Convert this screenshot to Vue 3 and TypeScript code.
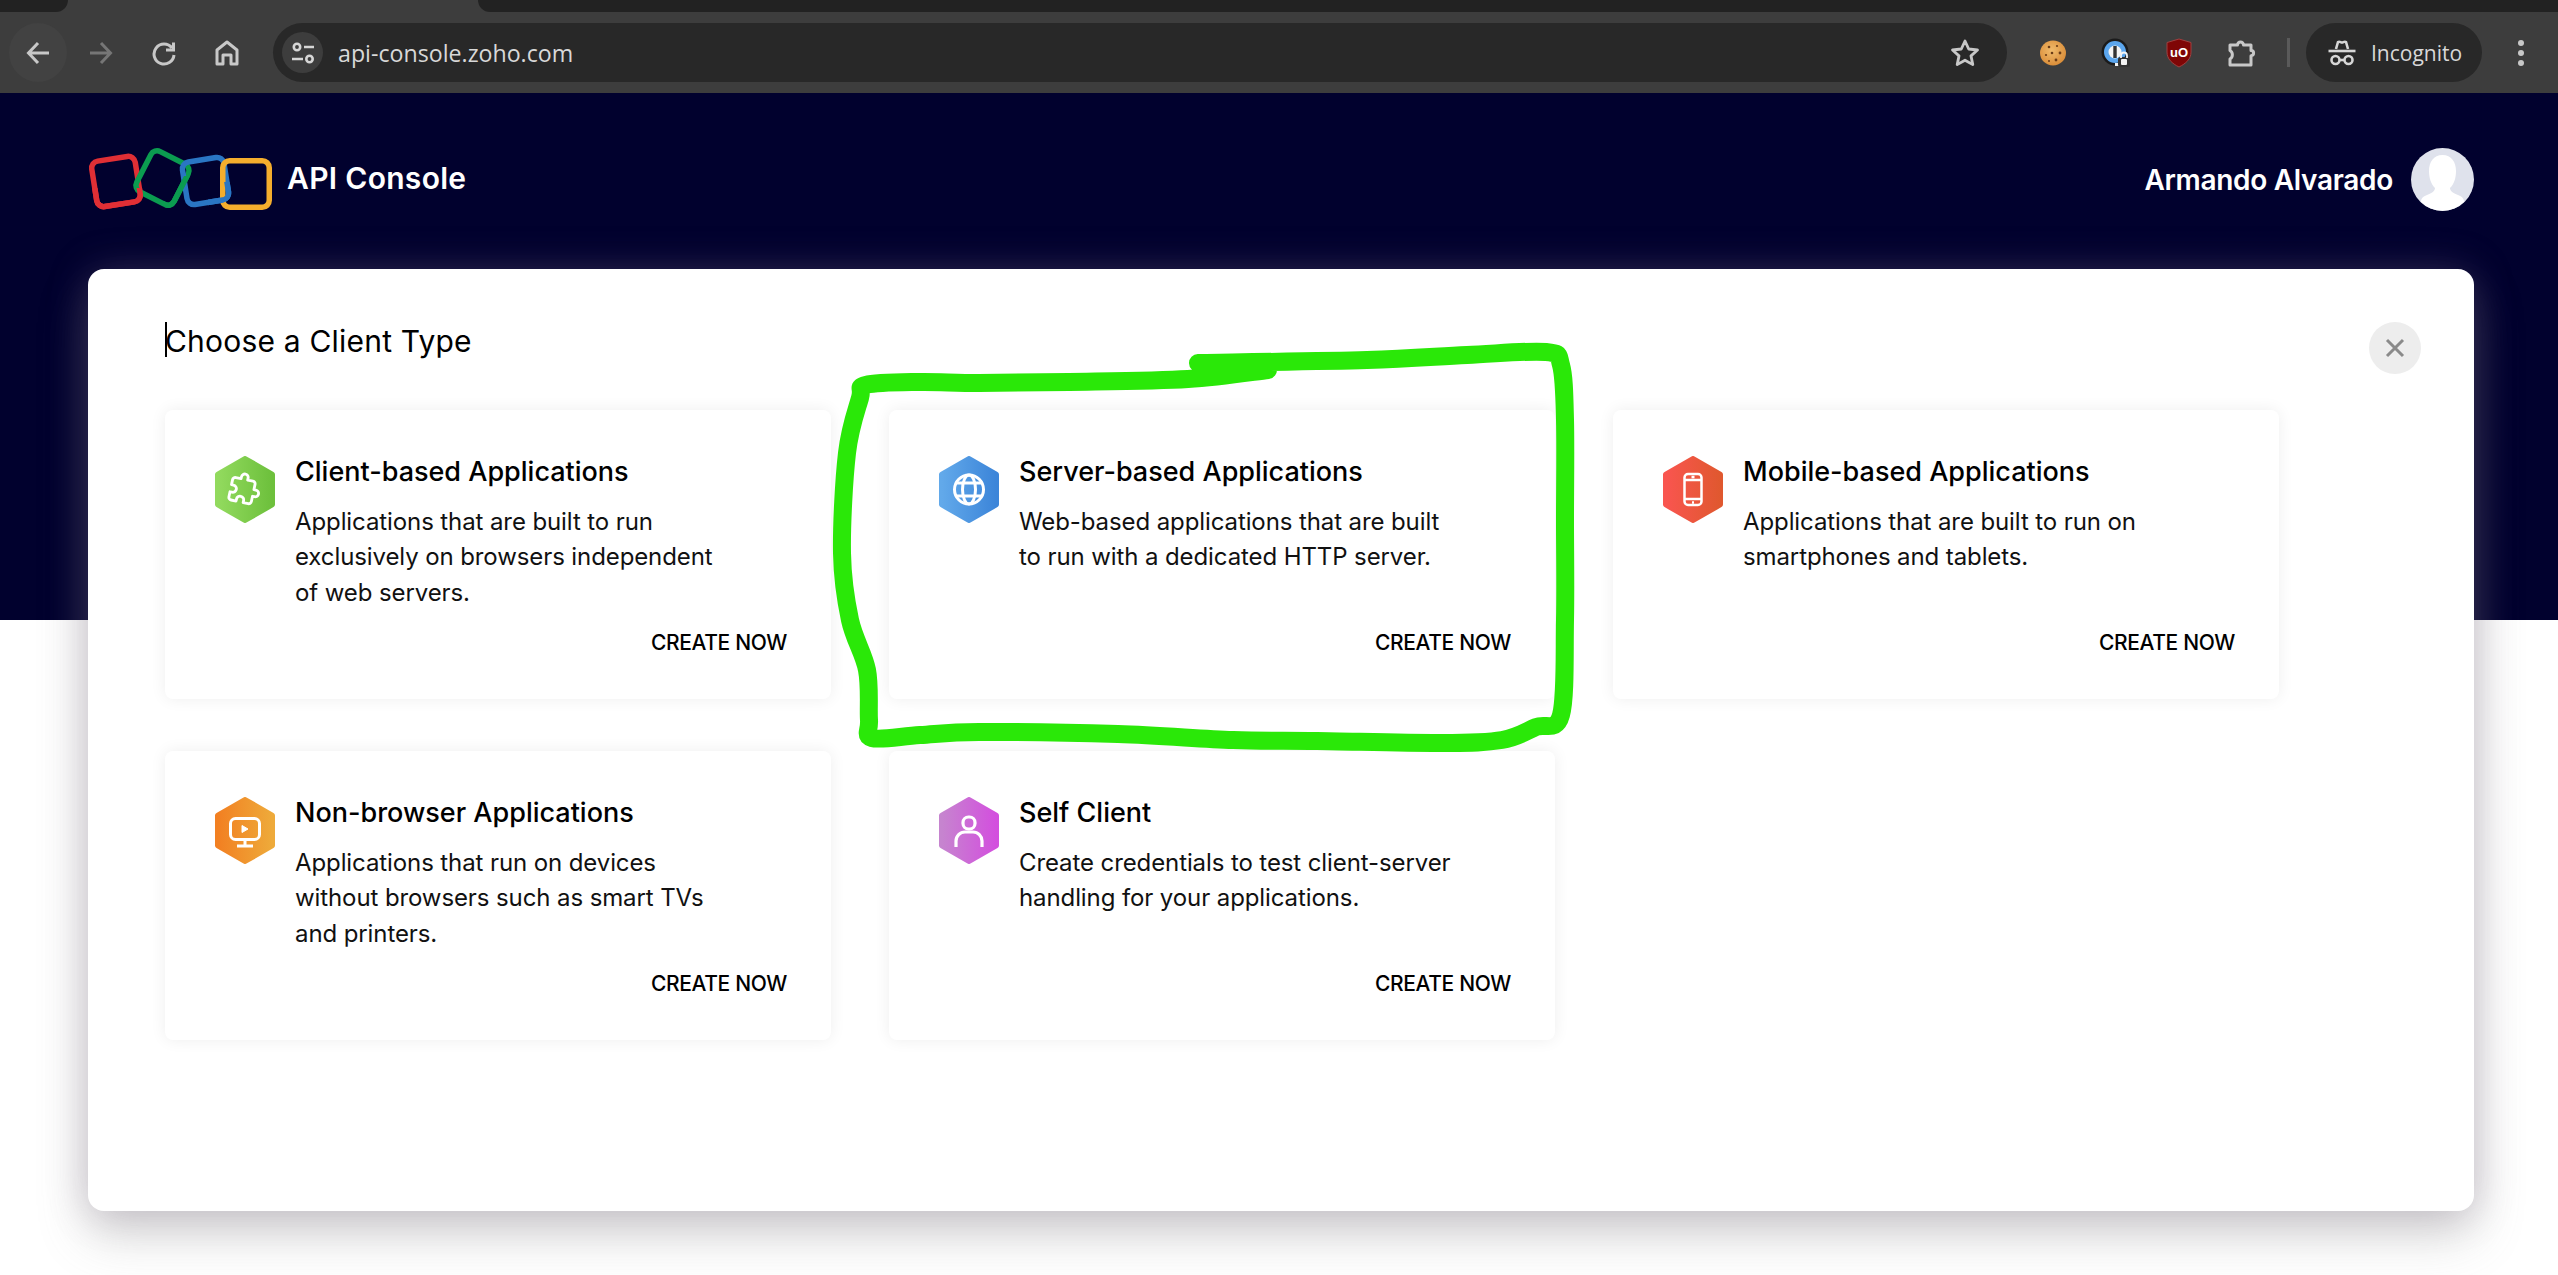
<template>
  <div class="window">
    <div class="tabstrip">
      <div class="tab-left"></div>
      <div class="tab-active"></div>
      <div class="tab-right"></div>
    </div>

    <div class="toolbar">
      <div class="nav">
        <button class="tool-btn hovered">
          <svg width="26" height="26" viewBox="0 0 26 26" fill="none" stroke="#c8c8c8" stroke-width="3">
            <path d="M24 13H4M13 3 3.500 13 13 23" />
          </svg>
        </button>
        <button class="tool-btn">
          <svg width="26" height="26" viewBox="0 0 26 26" fill="none" stroke="#767676" stroke-width="3">
            <path d="M2 13h20M13 3l9.500 10L13 23" />
          </svg>
        </button>
        <button class="tool-btn">
          <svg width="26" height="26" viewBox="0 0 26 26" fill="none" stroke="#c8c8c8" stroke-width="3">
            <path d="M21 8a10 10 0 1 0 2 7" />
            <path d="M22.500 2.500V10H15" />
          </svg>
        </button>
        <button class="tool-btn">
          <svg width="28" height="28" viewBox="0 0 28 28" fill="none" stroke="#c8c8c8" stroke-width="3">
            <path d="M4 25V11l10-8 10 8v14h-6v-9h-8v9z" stroke-linejoin="round" />
          </svg>
        </button>
      </div>

      <div class="omnibox">
        <span class="site-chip">
          <svg width="24" height="24" viewBox="0 0 24 24" fill="none" stroke="#d6d6d6" stroke-width="2.600">
            <circle cx="6" cy="6" r="3.200" />
            <path d="M13 6h10M1 18h11" />
            <circle cx="18.500" cy="18" r="3.200" />
          </svg>
        </span>
        <span class="url">api-console.zoho.com</span>
        <svg class="star" width="32" height="32" viewBox="0 0 32 32" fill="none" stroke="#c8c8c8" stroke-width="2.800">
          <path d="M16 4l3.700 8 8.800 1-6.500 5.900 1.800 8.700L16 23.200l-7.800 4.400L10 18.900 3.500 13l8.800-1z" stroke-linejoin="round" />
        </svg>
      </div>

      <div class="extensions">
        <button class="tool-btn">
          <svg width="28" height="28" viewBox="0 0 28 28">
            <defs>
              <radialGradient id="cookie" cx="0.450" cy="0.400" r="0.650">
                <stop offset="0" stop-color="#f0bb6c" />
                <stop offset="1" stop-color="#d98a35" />
              </radialGradient>
            </defs>
            <ellipse cx="14" cy="14" rx="13" ry="12.500" fill="url(#cookie)" />
            <g fill="#6b3d17">
              <circle cx="10" cy="8" r="1.300" />
              <circle cx="18" cy="7" r="1.100" />
              <circle cx="21" cy="14" r="1.400" />
              <circle cx="13" cy="14" r="1.300" />
              <circle cx="7" cy="16" r="1.100" />
              <circle cx="17" cy="21" r="1.400" />
              <circle cx="10" cy="22" r="1" />
            </g>
          </svg>
        </button>
        <button class="tool-btn">
          <svg width="30" height="30" viewBox="0 0 30 30">
            <circle cx="14" cy="14" r="13.500" fill="#1b1b1b" />
            <circle cx="14" cy="14" r="11" fill="#5ba6ee" />
            <circle cx="14" cy="14" r="6.500" fill="#f4f4f4" />
            <rect x="12.300" y="8" width="3.400" height="12" fill="#333" />
            <path d="M14 25h6v3h-6z" fill="#f4f4f4" />
            <rect x="17" y="19" width="12" height="10" rx="2.500" fill="#333" />
            <path d="M20 20v-2.500a3 3 0 0 1 6 0V20" fill="none" stroke="#f4f4f4" stroke-width="1.800" />
            <rect x="20" y="21" width="6" height="6" rx="1" fill="#f4f4f4" />
          </svg>
        </button>
        <button class="tool-btn">
          <svg width="28" height="30" viewBox="0 0 28 30">
            <path d="M14 1l12 3.500V14c0 7-5 11.500-12 15C7 25.500 2 21 2 14V4.500z" fill="#7f0606" stroke="#a04040" stroke-width="1" />
            <text x="14" y="19" text-anchor="middle" class="ublock-text">uO</text>
          </svg>
        </button>
        <button class="tool-btn">
          <svg width="30" height="30" viewBox="0 0 30 30" fill="none" stroke="#c8c8c8" stroke-width="3">
            <path d="M3 7h7.500a3 3 0 0 1 6 0H24v5.500a2.600 2.600 0 0 1 0 5.200V27H3v-6a5 5 0 0 0 0-8.500z" stroke-linejoin="round" />
          </svg>
        </button>
      </div>

      <span class="separator"></span>

      <div class="incognito">
        <svg width="30" height="28" viewBox="0 0 30 28" fill="none" stroke="#d6d6d6" stroke-width="2.600">
          <path d="M9 10l2-7c1.500-1 2.700.5 4 .5s2.500-1.500 4-.5l2 7" />
          <path d="M1.500 12h27" />
          <circle cx="8.500" cy="21" r="4" />
          <circle cx="21.500" cy="21" r="4" />
          <path d="M12.500 21h5" />
        </svg>
        <span>Incognito</span>
      </div>

      <button class="tool-btn kebab">
        <i></i><i></i><i></i>
      </button>
    </div>

    <main class="page">
      <div class="backdrop"></div>

      <header class="site-header">
        <div class="brand">
          <svg class="logo" width="184" height="66" viewBox="0 0 184 66" fill="none" stroke-width="5.500">
            <defs>
              <clipPath id="logo-red-top"><rect x="0" y="42" width="70" height="24" /></clipPath>
              <clipPath id="logo-green-low"><rect x="76" y="30" width="30" height="36" /></clipPath>
              <clipPath id="logo-blue-low"><rect x="120" y="36" width="40" height="30" /></clipPath>
            </defs>
            <rect x="6" y="12.500" width="44" height="46" rx="7" stroke="#e02f35" transform="rotate(-9 28 35.500)" />
            <rect x="53.500" y="9.500" width="42" height="45" rx="7" stroke="#0b9c50" transform="rotate(27 74.500 32)" />
            <rect x="96.500" y="13.500" width="42" height="43" rx="7" stroke="#2a76c4" transform="rotate(-9 117.500 35)" />
            <rect x="134.750" y="14.750" width="46.500" height="46.500" rx="7" stroke="#f5ae2d" />
            <g clip-path="url(#logo-red-top)">
              <rect x="6" y="12.500" width="44" height="46" rx="7" stroke="#e02f35" transform="rotate(-9 28 35.500)" />
            </g>
            <g clip-path="url(#logo-green-low)">
              <rect x="53.500" y="9.500" width="42" height="45" rx="7" stroke="#0b9c50" transform="rotate(27 74.500 32)" />
            </g>
            <g clip-path="url(#logo-blue-low)">
              <rect x="96.500" y="13.500" width="42" height="43" rx="7" stroke="#2a76c4" transform="rotate(-9 117.500 35)" />
            </g>
          </svg>
          <span class="brand-name">API Console</span>
        </div>
        <div class="user">
          <span class="user-name">Armando Alvarado</span>
          <svg class="avatar" width="63" height="63" viewBox="0 0 63 63">
            <circle cx="31.500" cy="31.500" r="31.500" fill="#dfe2ec" />
            <path d="M31.500 7c9 0 13.500 7 13.500 16 0 7-2 13-6 17 0 3 3 5 8 7 5 2 6 4 6 7a31 31 0 0 1-43 0c0-3 1-5 6-7 5-2 8-4 8-7-4-4-6-10-6-17 0-9 4.500-16 13.500-16z" fill="#fff" />
          </svg>
        </div>
      </header>

      <section class="modal">
        <h1 class="modal-title">Choose a Client Type</h1>
        <button class="close-btn">
          <svg width="22" height="22" viewBox="0 0 22 22" fill="none" stroke="#8a8a8a" stroke-width="3">
            <path d="M3 3l16 16M19 3 3 19" />
          </svg>
        </button>

        <div class="card-grid">
          <article v-for="card in cards" :key="card.kind" class="card">
            <div class="card-top">
              <svg class="hex" width="60" height="67" viewBox="0 0 60 67">
                <defs>
                  <linearGradient :id="'hex-' + card.kind" x1="0" y1="0" x2="1" y2="0">
                    <stop offset="0" :stop-color="card.from" />
                    <stop offset="1" :stop-color="card.to" />
                  </linearGradient>
                </defs>
                <path
                  d="M30 3 57 18.500V48.500L30 64 3 48.500V18.500Z"
                  :fill="'url(#hex-' + card.kind + ')'"
                  :stroke="'url(#hex-' + card.kind + ')'"
                  stroke-width="6"
                  stroke-linejoin="round"
                />
                <g fill="none" stroke="#fff" stroke-width="2.800">
                  <g v-if="card.kind === 'client'" transform="translate(13 17) rotate(12 17 17) scale(1.350)">
                    <path d="M20.500 11H19V7c0-1.100-.9-2-2-2h-4V3.500C13 2.120 11.880 1 10.500 1S8 2.120 8 3.500V5H4c-1.100 0-2 .9-2 2v3.800h1.500c1.490 0 2.700 1.210 2.700 2.700s-1.210 2.700-2.700 2.700H2V20c0 1.100.9 2 2 2h3.800v-1.500c0-1.490 1.210-2.700 2.700-2.700s2.700 1.210 2.700 2.700V22H17c1.100 0 2-.9 2-2v-4h1.500c1.380 0 2.500-1.120 2.500-2.500S21.880 11 20.500 11z" stroke-width="2.100" stroke-linejoin="round" />
                  </g>
                  <g v-else-if="card.kind === 'server'" stroke-width="3">
                    <circle cx="30" cy="33.500" r="14.500" />
                    <ellipse cx="30" cy="33.500" rx="6.500" ry="14.500" />
                    <path d="M17 27h26M17 40h26" />
                  </g>
                  <g v-else-if="card.kind === 'mobile'" stroke-width="2.500">
                    <rect x="21.500" y="18" width="17" height="31" rx="3.500" />
                    <path d="M22 24h16M22 43h16M28.500 21h3M29 46.500h2" />
                  </g>
                  <g v-else-if="card.kind === 'device'" stroke-width="3">
                    <rect x="15.500" y="21.500" width="29" height="21" rx="5" />
                    <path d="M30 43v5M22 49h16" />
                    <path d="M27 28.500l6 3.500-6 3.500z" fill="#fff" stroke-width="1" />
                  </g>
                  <g v-else stroke-width="3.200">
                    <rect x="24" y="20" width="12" height="12" rx="5.500" />
                    <path d="M17 50v-6a9 9 0 0 1 9-9h8a9 9 0 0 1 9 9v6" />
                  </g>
                </g>
              </svg>
              <div class="card-copy">
                <h2 class="card-title">{{ card.title }}</h2>
                <p class="card-desc">{{ card.desc }}</p>
              </div>
            </div>
            <a class="card-action">CREATE NOW</a>
          </article>
        </div>
      </section>

      <!-- hand-drawn marker annotation on top of the screenshot -->
      <svg class="marker" width="760" height="420" viewBox="830 340 760 420" fill="none">
        <path :d="markerPath" stroke="#2ae808" stroke-width="18" stroke-linecap="round" stroke-linejoin="round" />
      </svg>
    </main>
  </div>
</template>

<script setup lang="ts">
interface ClientCard {
  kind: string
  title: string
  desc: string
  from: string
  to: string
}

const cards: ClientCard[] = [
  {
    kind: 'client',
    title: 'Client-based Applications',
    desc: 'Applications that are built to run\nexclusively on browsers independent\nof web servers.',
    from: '#92da5e',
    to: '#6dc03c',
  },
  {
    kind: 'server',
    title: 'Server-based Applications',
    desc: 'Web-based applications that are built\nto run with a dedicated HTTP server.',
    from: '#62a9ea',
    to: '#3c85d9',
  },
  {
    kind: 'mobile',
    title: 'Mobile-based Applications',
    desc: 'Applications that are built to run on\nsmartphones and tablets.',
    from: '#f9554f',
    to: '#e0582f',
  },
  {
    kind: 'device',
    title: 'Non-browser Applications',
    desc: 'Applications that run on devices\nwithout browsers such as smart TVs\nand printers.',
    from: '#f28022',
    to: '#eeaa3a',
  },
  {
    kind: 'self',
    title: 'Self Client',
    desc: 'Create credentials to test client-server\nhandling for your applications.',
    from: '#c684cf',
    to: '#d34fde',
  },
]

const markerPoints = [
  [1198, 363], [1367, 360], [1467, 355], [1546, 352], [1561, 365], [1565, 420],
  [1565, 520], [1565, 620], [1561, 715], [1536, 727], [1502, 740], [1442, 743],
  [1317, 741], [1233, 740], [1118, 734], [979, 732], [920, 735], [872, 738],
  [869, 720], [867, 670], [850, 620], [842, 553], [847, 453], [860, 398],
  [866, 385], [919, 382], [979, 383], [1069, 382], [1188, 379], [1268, 370],
]

// catmull-rom through the points so the line reads as a marker stroke
const smooth = (pts: number[][]): string => {
  let d = `M${pts[0][0]} ${pts[0][1]}`
  for (let i = 0; i < pts.length - 1; i++) {
    const p0 = pts[i - 1] ?? pts[i]
    const p1 = pts[i]
    const p2 = pts[i + 1]
    const p3 = pts[i + 2] ?? p2
    const c1x = p1[0] + (p2[0] - p0[0]) / 6
    const c1y = p1[1] + (p2[1] - p0[1]) / 6
    const c2x = p2[0] - (p3[0] - p1[0]) / 6
    const c2y = p2[1] - (p3[1] - p1[1]) / 6
    d += `C${c1x} ${c1y} ${c2x} ${c2y} ${p2[0]} ${p2[1]}`
  }
  return d
}

const markerPath = smooth(markerPoints)
</script>

<style>
html,
body {
  margin: 0;
  background: #fff;
}
</style>

<style scoped>
.window {
  width: 2558px;
  height: 1275px;
  overflow: hidden;
  position: relative;
  background: #fff;
  font-family: Inter, "Liberation Sans", sans-serif;
}

.tabstrip {
  display: flex;
  height: 12px;
  background: #3d3d3d;
}

.tab-left {
  width: 68px;
  background: #222;
  border-bottom-right-radius: 12px;
}

.tab-active {
  width: 410px;
}

.tab-right {
  flex: 1;
  background: #222;
  border-bottom-left-radius: 12px;
}

.toolbar {
  height: 81px;
  display: flex;
  align-items: center;
  background: #3d3d3d;
  padding: 0 8px 0 9px;
  box-sizing: border-box;
  font-family: "Open Sans", "Liberation Sans", sans-serif;
}

.nav,
.extensions {
  display: flex;
  gap: 5px;
}

.tool-btn {
  width: 58px;
  height: 59px;
  display: flex;
  align-items: center;
  justify-content: center;
  padding: 0;
  border: none;
  border-radius: 50%;
  background: none;
}

.tool-btn.hovered {
  background: #424242;
}

.omnibox {
  flex: 1;
  height: 59px;
  margin-left: 17px;
  display: flex;
  align-items: center;
  padding: 0 26px 0 9px;
  background: #282828;
  border-radius: 30px;
}

.site-chip {
  width: 41px;
  height: 41px;
  display: flex;
  align-items: center;
  justify-content: center;
  background: #3d3d3d;
  border-radius: 50%;
}

.url {
  flex: 1;
  margin-left: 15px;
  font-size: 23.200px;
  color: #d8d8d8;
}

.extensions {
  margin-left: 17px;
}

.ublock-text {
  font-family: "Liberation Sans", sans-serif;
  font-size: 13px;
  font-weight: 700;
  fill: #fff;
}

.separator {
  width: 3px;
  height: 29px;
  margin-left: 16px;
  background: #5a5a5a;
}

.incognito {
  width: 176px;
  height: 59px;
  margin-left: 16px;
  display: flex;
  align-items: center;
  gap: 14px;
  padding-left: 21px;
  box-sizing: border-box;
  background: #282828;
  border-radius: 30px;
  font-size: 21px;
  color: #d8d8d8;
}

.kebab {
  margin-left: 10px;
  flex-direction: column;
  gap: 4px;
}

.kebab i {
  width: 6px;
  height: 6px;
  border-radius: 50%;
  background: #c8c8c8;
}

.page {
  position: relative;
  height: 1182px;
}

.backdrop {
  position: absolute;
  top: 0;
  left: 0;
  right: 0;
  height: 527px;
  background: #01012e;
}

.site-header {
  position: relative;
  height: 176px;
  display: flex;
  align-items: flex-start;
  justify-content: space-between;
  padding: 53px 84px 0 88px;
  box-sizing: border-box;
  color: #fff;
}

.brand {
  display: flex;
  align-items: center;
  gap: 15px;
  height: 66px;
}

.brand-name {
  padding-bottom: 2px;
  font-size: 30px;
  font-weight: 600;
  letter-spacing: 0.3px;
}

.user {
  display: flex;
  align-items: center;
  gap: 18px;
  height: 66px;
}

.user-name {
  padding-top: 2px;
  font-size: 28px;
  font-weight: 600;
  letter-spacing: -0.3px;
}

.modal {
  position: relative;
  height: 942px;
  margin: 0 84px 0 88px;
  padding: 53px 0 0 77px;
  box-sizing: border-box;
  background: #fff;
  border-radius: 16px;
  box-shadow: 0 0 40px rgba(125, 105, 135, 0.3), 0 24px 50px rgba(120, 120, 120, 0.3);
}

.modal-title {
  position: relative;
  height: 35px;
  margin: 0 0 53px;
  font-size: 30px;
  line-height: 38px;
  font-weight: 400;
  color: #000;
  letter-spacing: 0.2px;
}

.modal-title::before {
  content: "";
  position: absolute;
  left: 0;
  top: 0;
  width: 2px;
  height: 35px;
  background: #000;
}

.close-btn {
  position: absolute;
  top: 53px;
  right: 53px;
  width: 52px;
  height: 52px;
  display: flex;
  align-items: center;
  justify-content: center;
  padding: 0;
  border: none;
  border-radius: 50%;
  background: #ededed;
}

.card-grid {
  display: grid;
  grid-template-columns: repeat(3, 666px);
  grid-auto-rows: 289px;
  column-gap: 58px;
  row-gap: 52px;
}

.card {
  display: flex;
  flex-direction: column;
  padding: 46px 44px 40.500px 50px;
  box-sizing: border-box;
  background: #fff;
  border-radius: 8px;
  box-shadow: 0 0 16px rgba(0, 0, 0, 0.07);
}

.card-top {
  display: flex;
  gap: 20px;
}

.hex {
  flex: none;
}

.card-title {
  margin: 0 0 16.500px;
  font-size: 27px;
  line-height: 31px;
  font-weight: 500;
  color: #000;
  letter-spacing: 0;
}

.card-desc {
  margin: 0;
  font-size: 24px;
  line-height: 35.500px;
  color: #111;
  white-space: pre-line;
  letter-spacing: -0.1px;
}

.card-action {
  margin-top: auto;
  align-self: flex-end;
  font-size: 21px;
  line-height: 32px;
  font-weight: 500;
  color: #000;
  letter-spacing: -0.35px;
}

.marker {
  position: absolute;
  left: 830px;
  top: 247px;
  pointer-events: none;
}
</style>
